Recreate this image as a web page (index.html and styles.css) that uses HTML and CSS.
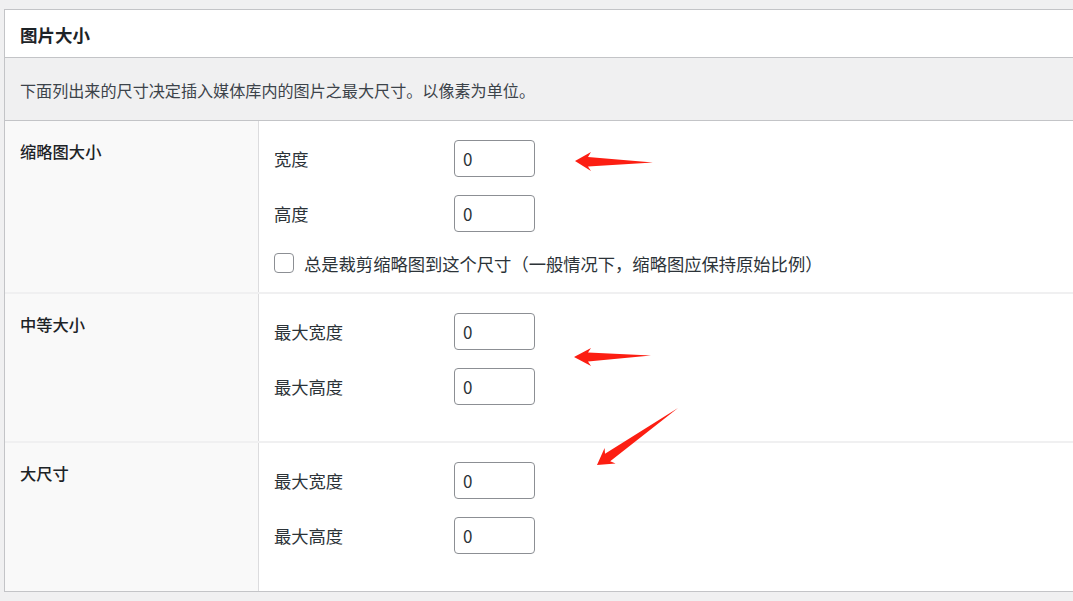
FILE: index.html
```html
<!DOCTYPE html>
<html lang="zh-CN">
<head>
    <meta charset="UTF-8">
    <meta name="viewport" content="width=device-width, initial-scale=1.0">
    <title>媒体设置</title>
    <link rel="stylesheet" href="styles.css">
</head>
<body>
    <div class="panel">
        <h2 class="panel-title">图片大小</h2>
        <p class="panel-desc">下面列出来的尺寸决定插入媒体库内的图片之最大尺寸。以像素为单位。</p>

        <!-- Thumbnail -->
        <div class="size-row">
            <div class="size-name">缩略图大小</div>
            <div class="size-fields">
                <div class="field">
                    <label class="field-label" for="thumbW">宽度</label>
                    <input class="num-input" type="text" id="thumbW" value="0">
                </div>
                <div class="field">
                    <label class="field-label" for="thumbH">高度</label>
                    <input class="num-input" type="text" id="thumbH" value="0">
                </div>
                <div class="check-field">
                    <input class="check" type="checkbox" id="thumbCrop">
                    <label for="thumbCrop">总是裁剪缩略图到这个尺寸（一般情况下，缩略图应保持原始比例）</label>
                </div>
            </div>
        </div>

        <!-- Medium -->
        <div class="size-row tall">
            <div class="size-name">中等大小</div>
            <div class="size-fields">
                <div class="field">
                    <label class="field-label" for="medW">最大宽度</label>
                    <input class="num-input" type="text" id="medW" value="0">
                </div>
                <div class="field">
                    <label class="field-label" for="medH">最大高度</label>
                    <input class="num-input" type="text" id="medH" value="0">
                </div>
            </div>
        </div>

        <!-- Large -->
        <div class="size-row tall last">
            <div class="size-name">大尺寸</div>
            <div class="size-fields">
                <div class="field">
                    <label class="field-label" for="largeW">最大宽度</label>
                    <input class="num-input" type="text" id="largeW" value="0">
                </div>
                <div class="field">
                    <label class="field-label" for="largeH">最大高度</label>
                    <input class="num-input" type="text" id="largeH" value="0">
                </div>
            </div>
        </div>
    </div>

    <!-- Annotation arrows drawn over the screenshot -->
    <svg class="marks" width="1073" height="601" viewBox="0 0 1073 601">
        <polygon points="575,161 591,152 588,157 653,162.5 588,166.5 591,171" />
        <polygon points="574,357 591,348 588,352.5 651,355.5 588,361.5 591,366" />
        <polygon points="597,465 604.6,448 605,453.8 678,408 610.2,461.2 615.6,463.6" />
    </svg>
</body>
</html>
```

FILE: styles.css
```css
/* General Styling */
body {
    margin: 0;
    background: #f0f0f1;
    color: #3c434a;
    font-family: "Noto Sans CJK SC", "Noto Sans", sans-serif;
    overflow: hidden;
    height: 601px;
}

/* Settings Panel */
.panel {
    margin: 9px -4px 0 4px;
    background: #fff;
    border: 1px solid #c3c4c7;
}

.panel-title {
    margin: 0;
    padding: 13px 15px 10px;
    font-size: 17.5px;
    line-height: 24px;
    font-weight: 700;
    color: #1d2327;
    border-bottom: 1px solid #c3c4c7;
}

.panel-desc {
    margin: 0;
    padding: 21px 15px 19px;
    font-size: 16.1px;
    line-height: 22px;
    background: #f0f0f1;
    border-bottom: 1px solid #c3c4c7;
}

/* Size Rows */
.size-row {
    display: flex;
    border-bottom: 2px solid #f0f0f1;
}

.size-row.last {
    border-bottom: none;
}

.size-name {
    width: 238px;
    padding: 19px 0 0 15px;
    background: #f9f9f9;
    border-right: 1px solid #dcdcde;
    font-size: 16.3px;
    line-height: 22px;
    font-weight: 500;
    color: #1d2327;
}

.size-fields {
    flex: 1;
    display: flex;
    flex-direction: column;
    gap: 18px;
    padding: 19px 15px 16px;
}

.size-row.tall .size-fields {
    padding-bottom: 36px;
}

.size-row.last .size-fields {
    padding-bottom: 37px;
}

.field {
    display: flex;
    align-items: center;
}

.field-label {
    width: 180px;
    font-size: 17.3px;
    color: #2c3338;
}

.num-input {
    box-sizing: border-box;
    width: 81px;
    height: 37px;
    margin: 0;
    padding: 0 8px;
    border: 1px solid #8c8f94;
    border-radius: 4px;
    background: #fff;
    color: #2c3338;
    font-family: inherit;
    font-size: 17px;
}

/* Crop Checkbox */
.check-field {
    display: flex;
    align-items: center;
    gap: 10px;
    height: 26px;
    font-size: 17.3px;
    color: #2c3338;
}

.check {
    appearance: none;
    box-sizing: border-box;
    width: 20px;
    height: 20px;
    margin: 0;
    border: 1px solid #8c8f94;
    border-radius: 4px;
    background: #fff;
}

/* Red annotation arrows */
.marks {
    position: absolute;
    top: 0;
    left: 0;
    pointer-events: none;
}

.marks polygon {
    fill: #fc1e12;
}
```
